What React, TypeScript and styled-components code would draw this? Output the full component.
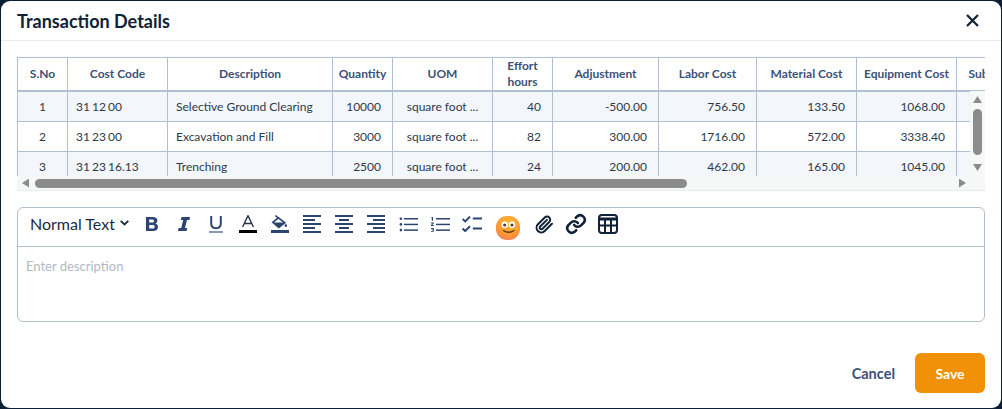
import React from "react";
import styled, { createGlobalStyle } from "styled-components";

const GlobalStyle = createGlobalStyle`
  html, body {
    margin: 0;
    padding: 0;
    background: #0b1e33;
  }
  * {
    box-sizing: border-box;
  }
`;

const Page = styled.div`
  width: 1002px;
  height: 409px;
  padding: 1px;
  font-family: Lato, "Open Sans", sans-serif;
  overflow: hidden;
`;

const Modal = styled.div`
  width: 100%;
  height: 100%;
  background: #ffffff;
  border-radius: 9px;
  display: flex;
  flex-direction: column;
`;

const Header = styled.div`
  height: 40px;
  flex: none;
  display: flex;
  align-items: center;
  justify-content: space-between;
  padding: 0 22px 0 16px;
  border-bottom: 1px solid #e7eaed;
`;

const Title = styled.h2`
  margin: 0;
  font-size: 18px;
  font-weight: 700;
  color: #0f2236;
`;

const CloseButton = styled.button`
  border: 0;
  padding: 0;
  background: none;
  display: flex;
  color: #0f2236;
`;

const Body = styled.div`
  flex: 1;
  display: flex;
  flex-direction: column;
  padding: 16px 16px 15px;
`;

const TableFrame = styled.div`
  position: relative;
  height: 134px;
  flex: none;
  overflow: hidden;
`;

const Table = styled.table`
  table-layout: fixed;
  width: 1067px;
  border-collapse: separate;
  border-spacing: 0;
`;

const HeadCell = styled.th`
  height: 35px;
  padding: 0 4px;
  font-size: 12px;
  line-height: 16px;
  font-weight: 700;
  color: #3c5277;
  text-align: center;
  background: #fff;
  border-top: 1px solid #afc0d2;
  border-right: 1px solid #afc0d2;
  border-bottom: 2px solid #afc0d2;
  &:first-child {
    border-left: 1px solid #afc0d2;
  }
`;

const Row = styled.tr<{ $shaded: boolean }>`
  background: ${(p) => (p.$shaded ? "#f3f6fa" : "#ffffff")};
`;

const Cell = styled.td<{ $align: string }>`
  height: 30px;
  padding: 0 ${(p) => (p.$align === "right" ? "11px" : "8px")} 0 8px;
  font-size: 12px;
  color: #2d3a4a;
  white-space: nowrap;
  overflow: hidden;
  text-align: ${(p) => p.$align};
  border-right: 1px solid #afc0d2;
  border-bottom: 1px solid #afc0d2;
  &:first-child {
    border-left: 1px solid #afc0d2;
  }
  &:nth-child(2) {
    word-spacing: -1px;
  }
`;

const HScrollbar = styled.div`
  position: absolute;
  left: 0;
  right: 0;
  bottom: 0;
  height: 15px;
  display: flex;
  align-items: center;
  padding: 0 19px 0 5px;
  background: #f6f7f7;
  border-bottom: 1px solid #e3edf2;
`;

const VScrollbar = styled.div`
  position: absolute;
  top: 34px;
  right: 0;
  width: 15px;
  height: 85px;
  display: flex;
  flex-direction: column;
  align-items: center;
  padding: 5px 0;
  background: #f6f7f7;
`;

const HThumb = styled.div`
  width: 652px;
  height: 9px;
  margin: 0 auto 0 6px;
  border-radius: 5px;
  background: #8c8c8c;
`;

const VThumb = styled.div`
  width: 9px;
  height: 46px;
  margin: 6px 0 auto;
  border-radius: 5px;
  background: #8c8c8c;
`;

const Arrow = styled.span<{ $dir: "up" | "down" | "left" | "right" }>`
  flex: none;
  width: ${(p) => (p.$dir === "up" || p.$dir === "down" ? "9px" : "7px")};
  height: ${(p) => (p.$dir === "up" || p.$dir === "down" ? "7px" : "9px")};
  background: #8c8c8c;
  clip-path: ${(p) =>
    ({
      up: "polygon(50% 0, 100% 100%, 0 100%)",
      down: "polygon(0 0, 100% 0, 50% 100%)",
      left: "polygon(100% 0, 100% 100%, 0 50%)",
      right: "polygon(0 0, 100% 50%, 0 100%)",
    })[p.$dir]};
`;

const Editor = styled.div`
  margin-top: 16px;
  height: 115px;
  flex: none;
  border: 1px solid #b1bfcc;
  border-radius: 6px;
  display: flex;
  flex-direction: column;
`;

const Toolbar = styled.div`
  height: 39px;
  flex: none;
  display: flex;
  align-items: center;
  padding: 0 0 6px 12px;
  border-bottom: 1px solid #b1bfcc;
`;

const FormatSelect = styled.div`
  width: 106px;
  display: flex;
  align-items: center;
  gap: 5px;
  padding-bottom: 2px;
  font-size: 16px;
  color: #1c2b3e;
`;

const ToolButton = styled.span`
  width: 32px;
  height: 32px;
  flex: none;
  display: flex;
  align-items: center;
  justify-content: center;
  color: #2b4570;
`;

const EmojiButton = styled(ToolButton)`
  width: 40px;
  padding-top: 7px;
`;

const Placeholder = styled.div`
  padding: 11px 8px;
  font-size: 13px;
  line-height: 16px;
  color: #b2b9c2;
`;

const Footer = styled.div`
  margin-top: auto;
  display: flex;
  align-items: center;
  justify-content: flex-end;
  gap: 20px;
`;

const CancelButton = styled.button`
  border: 0;
  padding: 0;
  background: none;
  font-family: inherit;
  font-size: 14.5px;
  font-weight: 700;
  color: #3c5277;
`;

const SaveButton = styled.button`
  width: 70px;
  height: 40px;
  border: 0;
  border-radius: 6px;
  background: #f09107;
  font-family: inherit;
  font-size: 14px;
  font-weight: 700;
  color: #ffffff;
`;

const columns = [
  { title: "S.No", width: 51, align: "center" },
  { title: "Cost Code", width: 100, align: "left" },
  { title: "Description", width: 165, align: "left" },
  { title: "Quantity", width: 60, align: "right" },
  { title: "UOM", width: 100, align: "center" },
  { title: "Effort hours", width: 60, align: "right" },
  { title: "Adjustment", width: 106, align: "right" },
  { title: "Labor Cost", width: 98, align: "right" },
  { title: "Material Cost", width: 100, align: "right" },
  { title: "Equipment Cost", width: 100, align: "right" },
  { title: "Subcontractor Cost", width: 127, align: "right" },
];

const rows = [
  ["1", "31 12 00", "Selective Ground Clearing", "10000", "square foot ...", "40", "-500.00", "756.50", "133.50", "1068.00", ""],
  ["2", "31 23 00", "Excavation and Fill", "3000", "square foot ...", "82", "300.00", "1716.00", "572.00", "3338.40", ""],
  ["3", "31 23 16.13", "Trenching", "2500", "square foot ...", "24", "200.00", "462.00", "165.00", "1045.00", ""],
];

function Glyph({ w, h, children }: { w: number; h: number; children: React.ReactNode }) {
  return (
    <svg width={w} height={h} viewBox={`0 0 ${w} ${h}`} fill="currentColor">
      {children}
    </svg>
  );
}

function Lines({ spans }: { spans: [number, number][] }) {
  return (
    <Glyph w={18} h={18}>
      {spans.map(([x, w], i) => (
        <rect key={i} x={x} y={i * 4} width={w} height={2} />
      ))}
    </Glyph>
  );
}

const BoldIcon = () => (
  <Glyph w={12} h={14}>
    <path
      fillRule="evenodd"
      d="M0 0h6.800C9.700 0 11.400 1.400 11.400 3.600c0 1.500-.8 2.500-2 3 1.600.4 2.600 1.700 2.600 3.400 0 2.500-1.900 4-5 4H0zM3.200 2.500v3h2.900c1.200 0 1.900-.5 1.900-1.500s-.7-1.500-1.900-1.500zM3.200 8v3.500h3.400c1.400 0 2.100-.6 2.100-1.800S8 8 6.600 8z"
    />
  </Glyph>
);

const ItalicIcon = () => (
  <Glyph w={12} h={14}>
    <path d="M3.500 0H12l-.6 3H9L7 11h2.200l-.6 3H0l.6-3h2.600l2-8H2.900z" />
  </Glyph>
);

const UnderlineIcon = () => (
  <svg width="14" height="17" viewBox="0 0 14 17" fill="none" stroke="currentColor">
    <path d="M2.200 0v7.600c0 3 1.900 4.700 4.800 4.700s4.800-1.700 4.800-4.700V0" strokeWidth="2" />
    <path d="M0 16h14" strokeWidth="1.500" opacity="0.75" />
  </svg>
);

const TextColorIcon = () => (
  <svg width="18" height="18" viewBox="0 0 18 18" fill="none">
    <path d="M3.600 12 9 .6 14.400 12M5.300 8.500h7.400" stroke="#26364a" strokeWidth="1.400" />
    <rect x="0" y="15" width="18" height="3" fill="#000" />
  </svg>
);

const FillIcon = () => (
  <svg width="18" height="18" viewBox="0 0 18 18" fill="none">
    <path d="M4.500.5 7.500 3.500" stroke="#2b4570" strokeWidth="1.600" />
    <path d="M7.500 2.800 13.800 7.800 7.800 12.500 1.800 7.300z" fill="#fff" stroke="#2b4570" strokeWidth="1.600" />
    <path d="M2 7.400h11.800L7.800 12.500z" fill="#2b4570" />
    <path d="M14.800 8.500c.7 1 1.200 1.700 1.200 2.300a1.200 1.200 0 0 1-2.400 0c0-.6.500-1.300 1.200-2.300z" fill="#2b4570" />
    <rect x="0" y="15" width="18" height="3" fill="#2b4570" />
  </svg>
);

const BulletIcon = () => (
  <Glyph w={19} h={15}>
    <circle cx="1.900" cy="1.700" r="1.300" />
    <circle cx="1.900" cy="7.400" r="1.300" />
    <circle cx="1.900" cy="13.100" r="1.300" />
    <rect x="5" y="1" width="14" height="1.500" />
    <rect x="5" y="6.700" width="14" height="1.500" />
    <rect x="5" y="12.400" width="14" height="1.500" />
  </Glyph>
);

const NumberIcon = () => (
  <Glyph w={19} h={15}>
    <path d="M.8 0H2v3.800H.8V1.100L0 1.300zM0 5.500h2.800v.8L1.300 8h1.500v.9H0v-.8L1.500 6.400H0zM0 11h2.800v3.800H0v-.8h1.800v-.7H.7v-.7h1.100v-.7H0z" />
    <rect x="5" y="1" width="14" height="1.500" />
    <rect x="5" y="6.700" width="14" height="1.500" />
    <rect x="5" y="12.400" width="14" height="1.500" />
  </Glyph>
);

const ChecklistIcon = () => (
  <svg width="21" height="16" viewBox="0 0 21 16" fill="none" stroke="currentColor">
    <path d="M.6 3 3.200 5.400 8 .6M.6 12.600 3.200 15 8 10.200" strokeWidth="2" />
    <path d="M10.800 2.500H20M10.800 12.500H20" strokeWidth="2" />
  </svg>
);

const EmojiIcon = () => (
  <svg width="24" height="24" viewBox="0 0 24 24">
    <defs>
      <radialGradient id="face" cx="0.55" cy="0.3" r="0.85">
        <stop offset="0" stopColor="#fbb92e" />
        <stop offset="0.65" stopColor="#fb9436" />
        <stop offset="1" stopColor="#f36f84" />
      </radialGradient>
    </defs>
    <rect x="0" y="0" width="24" height="24" rx="11" fill="url(#face)" />
    <circle cx="8.700" cy="8.700" r="3.200" fill="#fff" />
    <circle cx="16" cy="8.700" r="3.200" fill="#fff" />
    <circle cx="8.700" cy="9" r="1.600" fill="#5b3a3a" />
    <circle cx="16" cy="9" r="1.600" fill="#5b3a3a" />
    <path d="M7.500 14.500c3 2.300 7.500 2.300 10.500 0" fill="none" stroke="#5b3218" strokeWidth="1.300" strokeLinecap="round" />
  </svg>
);

const PaperclipIcon = () => (
  <svg width="19" height="19" viewBox="0 0 24 24" fill="none" stroke="#0f2236" strokeWidth="2.500" strokeLinecap="round" strokeLinejoin="round">
    <path d="m21.440 11.050-9.190 9.190a6 6 0 0 1-8.490-8.490l8.570-8.570A4 4 0 1 1 18 8.840l-8.590 8.570a2 2 0 0 1-2.830-2.830l8.490-8.480" />
  </svg>
);

const LinkIcon = () => (
  <svg width="22" height="22" viewBox="0 0 24 24" fill="none" stroke="#0f2236" strokeWidth="2.800" strokeLinecap="round">
    <path d="M10 13a5 5 0 0 0 7.500.5l3-3a5 5 0 0 0-7-7l-1.700 1.700" />
    <path d="M14 11a5 5 0 0 0-7.500-.5l-3 3a5 5 0 0 0 7 7l1.700-1.700" />
  </svg>
);

const TableIcon = () => (
  <svg width="20" height="20" viewBox="0 0 20 20" fill="none" stroke="#0f2236">
    <rect x="1" y="1" width="18" height="18" rx="3" strokeWidth="2" />
    <path d="M1 5h18" strokeWidth="3" />
    <path d="M1 11.500h18M7 5v14M13 5v14" strokeWidth="2" />
  </svg>
);

export default function App() {
  return (
    <Page>
      <GlobalStyle />
      <Modal>
        <Header>
          <Title>Transaction Details</Title>
          <CloseButton>
            <svg width="13" height="13" viewBox="0 0 13 13" stroke="currentColor" strokeWidth="2.200">
              <path d="M1 1l11 11M12 1 1 12" />
            </svg>
          </CloseButton>
        </Header>
        <Body>
          <TableFrame>
            <Table>
              <colgroup>
                {columns.map((c) => (
                  <col key={c.title} width={c.width} />
                ))}
              </colgroup>
              <thead>
                <tr>
                  {columns.map((c) => (
                    <HeadCell key={c.title}>{c.title}</HeadCell>
                  ))}
                </tr>
              </thead>
              <tbody>
                {rows.map((row, r) => (
                  <Row key={row[0]} $shaded={r % 2 === 0}>
                    {row.map((value, i) => (
                      <Cell key={i} $align={columns[i].align}>
                        {value}
                      </Cell>
                    ))}
                  </Row>
                ))}
              </tbody>
            </Table>
            <VScrollbar>
              <Arrow $dir="up" />
              <VThumb />
              <Arrow $dir="down" />
            </VScrollbar>
            <HScrollbar>
              <Arrow $dir="left" />
              <HThumb />
              <Arrow $dir="right" />
            </HScrollbar>
          </TableFrame>
          <Editor>
            <Toolbar>
              <FormatSelect>
                Normal Text
                <svg width="9" height="6" viewBox="0 0 9 6" fill="none" stroke="#1c2b3e" strokeWidth="1.800">
                  <path d="M.7.800 4.500 4.500 8.300.800" />
                </svg>
              </FormatSelect>
              <ToolButton><BoldIcon /></ToolButton>
              <ToolButton><ItalicIcon /></ToolButton>
              <ToolButton><UnderlineIcon /></ToolButton>
              <ToolButton><TextColorIcon /></ToolButton>
              <ToolButton><FillIcon /></ToolButton>
              <ToolButton><Lines spans={[[0, 18], [0, 12], [0, 18], [0, 12], [0, 18]]} /></ToolButton>
              <ToolButton><Lines spans={[[0, 18], [4, 10], [0, 18], [4, 10], [0, 18]]} /></ToolButton>
              <ToolButton><Lines spans={[[0, 18], [6, 12], [0, 18], [6, 12], [0, 18]]} /></ToolButton>
              <ToolButton><BulletIcon /></ToolButton>
              <ToolButton><NumberIcon /></ToolButton>
              <ToolButton><ChecklistIcon /></ToolButton>
              <EmojiButton><EmojiIcon /></EmojiButton>
              <ToolButton><PaperclipIcon /></ToolButton>
              <ToolButton><LinkIcon /></ToolButton>
              <ToolButton><TableIcon /></ToolButton>
            </Toolbar>
            <Placeholder>Enter description</Placeholder>
          </Editor>
          <Footer>
            <CancelButton>Cancel</CancelButton>
            <SaveButton>Save</SaveButton>
          </Footer>
        </Body>
      </Modal>
    </Page>
  );
}
